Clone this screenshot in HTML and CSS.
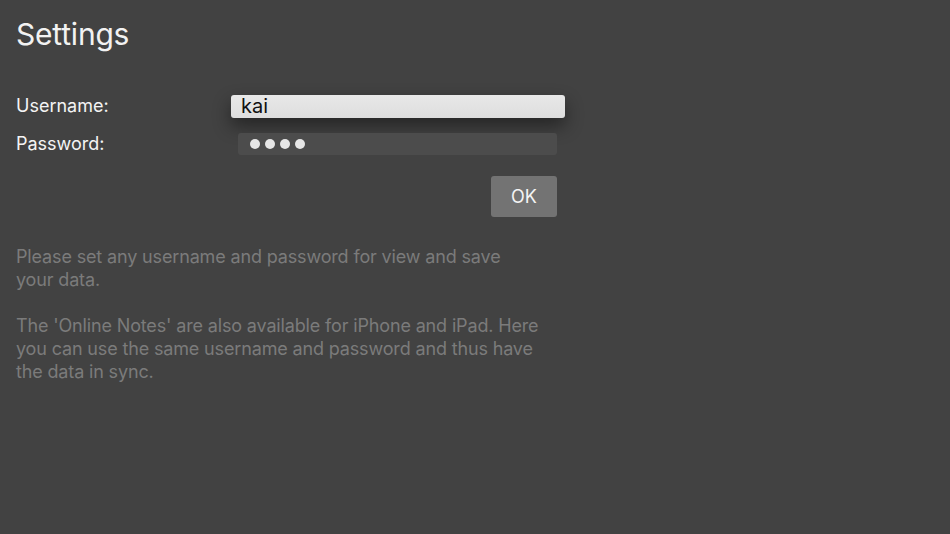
FILE: index.html
```html
<!DOCTYPE html>
<html>
<head>
<meta charset="utf-8">
<link rel="stylesheet" href="styles.css">
</head>
<body>
<div class="page">
  <h1 class="title">Settings</h1>
  <div class="form">
    <div class="label">Username:</div>
    <div class="field focused">kai</div>
    <div class="label">Password:</div>
    <div class="field secure"><span class="dot"></span><span class="dot"></span><span class="dot"></span><span class="dot"></span></div>
    <div class="actions"><div class="btn">OK</div></div>
  </div>
  <p class="info">Please set any username and password for view and save your data.</p>
  <p class="info">The 'Online Notes' are also available for iPhone and iPad. Here you can use the same username and password and thus have the data in sync.</p>
</div>
</body>
</html>
```
FILE: styles.css
```css
html, body {
  margin: 0;
  padding: 0;
  background: #424242;
  height: 100%;
}
.page {
  padding: 14px 16px 0 16px;
  font-family: Inter, "Noto Sans", sans-serif;
  color: #f2f2f2;
}
.title {
  margin: 0;
  font-size: 30px;
  font-weight: 400;
  line-height: 40px;
  letter-spacing: -0.2px;
}
.form {
  margin-top: 33px;
  display: grid;
  grid-template-columns: 222px 319px;
  grid-auto-rows: 38px;
  align-items: center;
}
.label {
  font-size: 18px;
  line-height: 22px;
  color: #f4f4f4;
}
.field {
  height: 22px;
  border-radius: 3px;
  box-sizing: border-box;
}
.focused {
  margin: 0 -8px 0 -7px;
  height: 23px;
  background: linear-gradient(#e8e8e8, #dedede);
  color: #111;
  font-size: 20px;
  line-height: 23px;
  padding-left: 10px;
  box-shadow: 0 8px 18px rgba(0,0,0,0.45);
}
.secure {
  background: #4c4c4c;
  display: flex;
  align-items: center;
  gap: 5px;
  padding-left: 12px;
}
.dot {
  width: 10px;
  height: 10px;
  border-radius: 50%;
  background: #e6e6e6;
}
.actions {
  grid-column: 2;
  grid-row: 3;
  align-self: start;
  display: flex;
  justify-content: flex-end;
  margin-top: 13px;
}
.btn {
  width: 66px;
  height: 41px;
  border-radius: 3px;
  background: #737373;
  color: #f4f4f4;
  font-size: 18px;
  display: flex;
  align-items: center;
  justify-content: center;
}
.info {
  margin: 0;
  width: 525px;
  font-size: 18px;
  line-height: 23px;
  letter-spacing: -0.15px;
  color: #7b7b7b;
}
.info:first-of-type {
  margin-top: 44px;
}
.info + .info {
  margin-top: 23px;
}
```
